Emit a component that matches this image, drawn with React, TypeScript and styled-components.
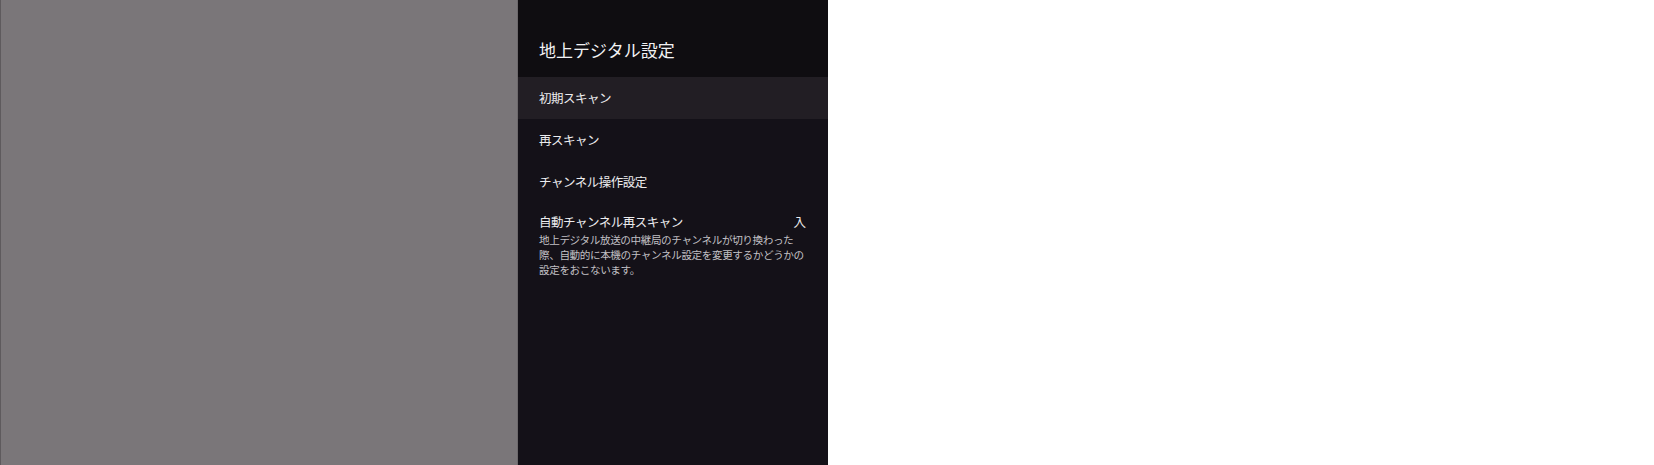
import React from "react";
import styled, { createGlobalStyle } from "styled-components";

const Global = createGlobalStyle`
  html, body { margin: 0; padding: 0; background: #ffffff; }
  body { font-family: "Noto Sans CJK JP", "Noto Sans", sans-serif; }
`;

const Screen = styled.div`
  display: flex;
  height: 465px;
  width: 1654px;
  background: #ffffff;
`;

const Backdrop = styled.div`
  width: 516px;
  height: 100%;
  background: #7a7679;
  border-left: 1px solid #5e5a5d;
  border-right: 1px solid #6d696c;
`;

const Panel = styled.div`
  width: 310px;
  height: 100%;
  background: #141118;
  display: flex;
  flex-direction: column;
`;

const Header = styled.div`
  height: 77px;
  box-sizing: border-box;
  padding: 38px 20px 0 21px;
  background: #0f0d11;
`;

const Title = styled.h1`
  margin: 0;
  font-size: 17px;
  line-height: 24px;
  font-weight: 400;
  color: #f2f2f4;
  letter-spacing: 0;
`;

const Row = styled.div<{ $active?: boolean }>`
  height: 42px;
  box-sizing: border-box;
  padding: 0 22px 0 21px;
  display: flex;
  align-items: center;
  background: ${(p) => (p.$active ? "#221e24" : "transparent")};
`;

const Label = styled.span`
  font-size: 12.5px;
  letter-spacing: -0.5px;
  line-height: 16px;
  color: #ececee;
`;

const DetailRow = styled.div`
  box-sizing: border-box;
  padding: 11px 22px 0 21px;
  display: flex;
  flex-direction: column;
`;

const DetailHead = styled.div`
  display: flex;
  justify-content: space-between;
  align-items: center;
  margin-bottom: 2px;
`;

const Value = styled.span`
  font-size: 12.5px;
  line-height: 16px;
  color: #ececee;
`;

const Description = styled.p`
  margin: 0;
  font-size: 10.6px;
  letter-spacing: -0.4px;
  line-height: 15px;
  color: #c2c0c5;
`;

export default function App() {
  return (
    <>
      <Global />
      <Screen>
        <Backdrop />
        <Panel>
          <Header>
            <Title>地上デジタル設定</Title>
          </Header>
          <Row $active>
            <Label>初期スキャン</Label>
          </Row>
          <Row>
            <Label>再スキャン</Label>
          </Row>
          <Row>
            <Label>チャンネル操作設定</Label>
          </Row>
          <DetailRow>
            <DetailHead>
              <Label>自動チャンネル再スキャン</Label>
              <Value>入</Value>
            </DetailHead>
            <Description>
              地上デジタル放送の中継局のチャンネルが切り換わった際、自動的に本機のチャンネル設定を変更するかどうかの設定をおこないます。
            </Description>
          </DetailRow>
        </Panel>
      </Screen>
    </>
  );
}
